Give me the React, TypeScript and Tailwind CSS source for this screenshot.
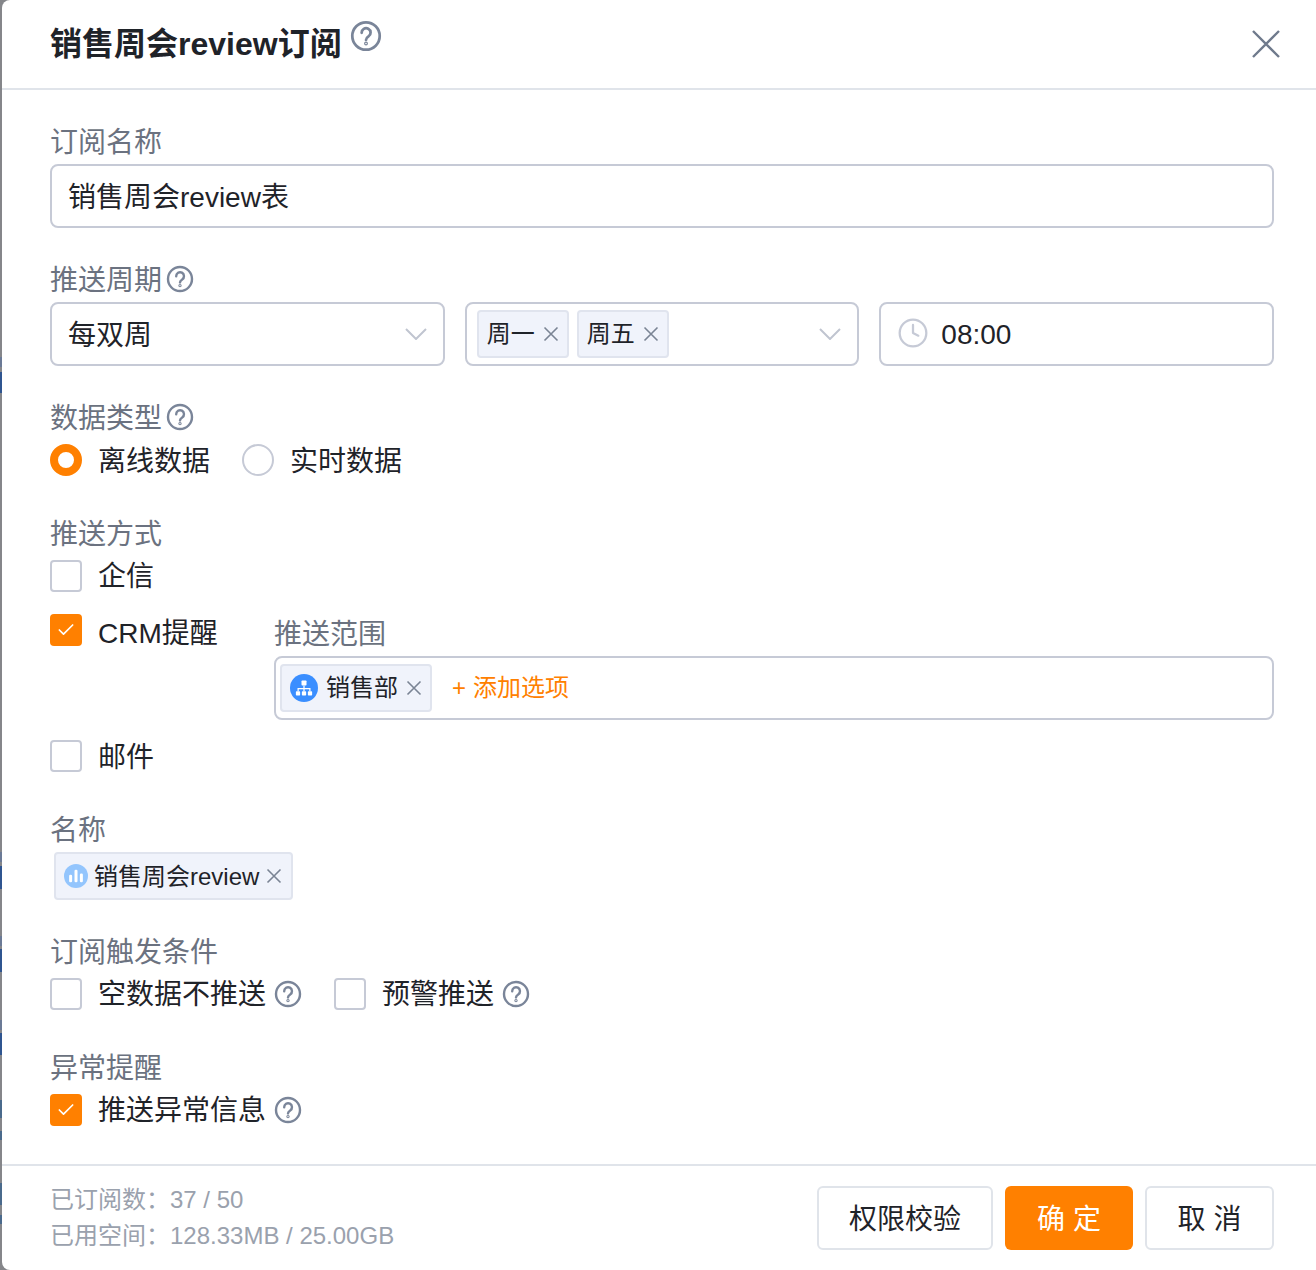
import React from "react";
import { Clock, Check } from "lucide-react";

const FONT = "font-['Liberation_Sans','Noto_Sans_CJK_SC',sans-serif]";

function Help({ className = "w-[28px] h-[28px]" }: { className?: string }) {
  return (
    <svg viewBox="0 0 28 28" className={`text-[#7a8599] shrink-0 ${className}`} fill="none" stroke="currentColor" strokeWidth="2.4" strokeLinecap="round">
      <circle cx="14" cy="14" r="12" />
      <path d="M10.2 11.2a3.9 3.9 0 1 1 6 3.2c-1.4.9-2.2 1.5-2.2 3" />
      <circle cx="14" cy="20.6" r="0.5" />
    </svg>
  );
}

function Chevron({ className = "" }: { className?: string }) {
  return (
    <svg viewBox="0 0 22 12" className={`w-[22px] h-[12px] text-[#c0c5d0] shrink-0 ${className}`} fill="none" stroke="currentColor" strokeWidth="2">
      <path d="M1 1l10 10L21 1" />
    </svg>
  );
}

function Label({ children }: { children: React.ReactNode }) {
  return <div className="h-[40px] mb-[2px] pt-[2px] flex items-center text-[28px] text-[#6b7280]">{children}</div>;
}

function CheckBox({ checked = false }: { checked?: boolean }) {
  if (checked) {
    return (
      <span className="w-[32px] h-[32px] rounded bg-[#ff8000] flex items-center justify-center shrink-0">
        <Check className="w-[20px] h-[20px] text-white" strokeWidth={2} />
      </span>
    );
  }
  return <span className="w-[32px] h-[32px] rounded border-2 border-[#c6cad6] bg-white shrink-0" />;
}

function Tag({ children, className = "" }: { children: React.ReactNode; className?: string }) {
  return (
    <span className={`h-[48px] flex items-center whitespace-nowrap rounded bg-[#f0f3fb] border-2 border-[#e0e4ee] text-[24px] text-[#1f2329] shrink-0 ${className}`}>
      {children}
    </span>
  );
}

function TagClose() {
  return (
    <svg viewBox="0 0 16 16" className="w-[16px] h-[16px] text-[#7a8494] shrink-0" fill="none" stroke="currentColor" strokeWidth="1.6">
      <path d="M1.5 1.5l13 13M14.5 1.5l-13 13" />
    </svg>
  );
}

// what shows of the page behind the dialog, down the left edge
function BackStrip() {
  return (
    <div className="w-[2px] h-[1270px] shrink-0 flex flex-col bg-[#85868a]">
      <div className="h-[357px]" />
      <div className="h-[10px] bg-[#6b7a96]" />
      <div className="h-[5px]" />
      <div className="h-[21px] bg-[#2f5590]" />
      <div className="h-[459px]" />
      <div className="h-[10px] bg-[#6b7a96]" />
      <div className="h-[4px]" />
      <div className="h-[23px] bg-[#2f5590]" />
      <div className="h-[47px]" />
      <div className="h-[10px] bg-[#6b7a96]" />
      <div className="h-[3px]" />
      <div className="h-[23px] bg-[#2f5590]" />
      <div className="h-[48px]" />
      <div className="h-[10px] bg-[#6b7a96]" />
      <div className="h-[3px]" />
      <div className="h-[22px] bg-[#2f5590]" />
      <div className="h-[45px]" />
      <div className="h-[18px] bg-[#4a6a8c]" />
      <div className="h-[13px]" />
      <div className="h-[9px] bg-[#4a6a8c]" />
      <div className="h-[43px]" />
      <div className="h-[22px] bg-[#4a6a8c]" />
      <div className="h-[10px]" />
      <div className="h-[9px] bg-[#4a6a8c]" />
    </div>
  );
}

export default function App() {
  return (
    <div className={`w-[1316px] h-[1270px] overflow-hidden flex bg-[#85868a] ${FONT}`}>
      <BackStrip />
      <div className="w-[1314px] h-[1270px] flex flex-col bg-white rounded-l-[8px] text-[#1f2329]">
        {/* header */}
        <div className="h-[90px] shrink-0 border-b-2 border-[#e0e4ea] pl-[48px] pr-[36px] flex items-center justify-between">
          <div className="flex items-start">
            <h1 className="text-[32px] font-semibold leading-[44px]">销售周会review订阅</h1>
            <Help className="w-[32px] h-[32px] ml-[8px] mt-[-2px]" />
          </div>
          <svg viewBox="0 0 28 28" className="w-[28px] h-[28px] text-[#6f7a8c]" fill="none" stroke="currentColor" strokeWidth="2.4">
            <path d="M1 1l26 26M27 1L1 27" />
          </svg>
        </div>

        {/* body */}
        <div className="flex-1 pl-[48px] pr-[42px] pt-[32px]">
          <Label>订阅名称</Label>
          <div className="h-[64px] border-2 border-[#c6cad6] rounded-[8px] px-[16px] pt-[4px] flex items-center text-[28px]">销售周会review表</div>

          <div className="mt-[32px]">
            <Label>
              推送周期
              <Help className="w-[28px] h-[28px] ml-[4px] mt-[-4px]" />
            </Label>
            <div className="grid grid-cols-3 gap-[20px]">
              <div className="h-[64px] border-2 border-[#c6cad6] rounded-[8px] pl-[16px] pr-[16px] flex items-center justify-between text-[28px]">
                <span className="pt-[4px]">每双周</span>
                <Chevron />
              </div>
              <div className="h-[64px] border-2 border-[#c6cad6] rounded-[8px] pl-[10px] pr-[16px] flex items-center gap-[8px]">
                <Tag className="w-[92px] pl-[8px] gap-[8px]">
                  周一
                  <TagClose />
                </Tag>
                <Tag className="w-[92px] pl-[8px] gap-[8px]">
                  周五
                  <TagClose />
                </Tag>
                <Chevron className="ml-auto" />
              </div>
              <div className="h-[64px] border-2 border-[#c6cad6] rounded-[8px] pl-[16px] flex items-center text-[28px]">
                <Clock className="w-[32px] h-[32px] text-[#c6cad6] mr-[12px] mt-[-2px]" strokeWidth={1.7} />
                <span className="pt-[2px]">08:00</span>
              </div>
            </div>
          </div>

          <div className="mt-[32px]">
            <Label>
              数据类型
              <Help className="w-[28px] h-[28px] ml-[4px] mt-[-4px]" />
            </Label>
            <div className="mt-[6px] flex items-center text-[28px] h-[32px]">
              <span className="w-[32px] h-[32px] rounded-full border-[8px] border-[#ff8000] bg-white shrink-0" />
              <span className="ml-[16px] pt-[3px]">离线数据</span>
              <span className="w-[32px] h-[32px] rounded-full border-2 border-[#c6cad6] ml-[32px] shrink-0" />
              <span className="ml-[16px] pt-[3px]">实时数据</span>
            </div>
          </div>

          <div className="mt-[38px]">
            <Label>推送方式</Label>
            <div className="mt-[6px] flex items-center gap-[16px] text-[28px] h-[32px]">
              <CheckBox />
              <span className="pt-[2px]">企信</span>
            </div>
            <div className="mt-[22px] flex items-start">
              <div className="w-[224px] flex items-center gap-[16px] text-[28px] h-[32px] shrink-0">
                <CheckBox checked />
                <span className="pt-[8px]">CRM提醒</span>
              </div>
              <div className="flex-1 mt-[-1px]">
                <div className="h-[40px] mb-[3px] pt-[4px] flex items-center text-[28px] text-[#6b7280]">推送范围</div>
                <div className="h-[64px] border-2 border-[#c6cad6] rounded-[8px] pl-[4px] flex items-center">
                  <Tag className="w-[152px] pl-[8px]">
                    <span className="w-[28px] h-[28px] rounded-full bg-[#3a8eff] flex items-center justify-center shrink-0 mr-[8px]">
                      <svg viewBox="0 0 16 16" className="w-[20px] h-[20px]" fill="white">
                        <rect x="6" y="2" width="4" height="4" rx="0.6" />
                        <rect x="1.5" y="10.5" width="3.4" height="3.4" rx="0.6" />
                        <rect x="6.3" y="10.5" width="3.4" height="3.4" rx="0.6" />
                        <rect x="11.1" y="10.5" width="3.4" height="3.4" rx="0.6" />
                        <path d="M7.5 6h1v2h4.7v2.5h-1V9H8.5v1.5h-1V9H3.8v1.5h-1V8h4.7z" />
                      </svg>
                    </span>
                    销售部
                    <span className="ml-[8px]">
                      <TagClose />
                    </span>
                  </Tag>
                  <span className="ml-[20px] text-[24px] text-[#ff8000] flex items-center">
                    <span className="mr-[7px]">+</span>
                    添加选项
                  </span>
                </div>
              </div>
            </div>
            <div className="mt-[20px] flex items-center gap-[16px] text-[28px] h-[32px]">
              <CheckBox />
              <span className="pt-[4px]">邮件</span>
            </div>
          </div>

          <div className="mt-[38px]">
            <Label>名称</Label>
            <Tag className="w-[239px] ml-[4px] pl-[8px]">
              <span className="w-[24px] h-[24px] rounded-full bg-[#93c5fd] flex items-center justify-center shrink-0 mr-[6px]">
                <svg viewBox="0 0 16 16" className="w-[20px] h-[20px]" fill="white">
                  <rect x="2.5" y="7" width="2.4" height="6" rx="1" />
                  <rect x="6.8" y="3" width="2.4" height="10" rx="1" />
                  <rect x="11.1" y="6" width="2.4" height="7" rx="1" />
                </svg>
              </span>
              <span className="pt-[2px]">销售周会review</span>
              <span className="ml-[7px]">
                <TagClose />
              </span>
            </Tag>
          </div>

          <div className="mt-[32px]">
            <Label>订阅触发条件</Label>
            <div className="mt-[6px] flex items-center text-[28px] h-[32px]">
              <CheckBox />
              <span className="ml-[16px] pt-[2px]">空数据不推送</span>
              <Help className="w-[28px] h-[28px] ml-[8px]" />
              <span className="ml-[32px] flex shrink-0">
                <CheckBox />
              </span>
              <span className="ml-[16px] pt-[2px]">预警推送</span>
              <Help className="w-[28px] h-[28px] ml-[8px]" />
            </div>
          </div>

          <div className="mt-[38px]">
            <Label>异常提醒</Label>
            <div className="mt-[6px] flex items-center text-[28px] h-[32px]">
              <CheckBox checked />
              <span className="ml-[16px] pt-[2px]">推送异常信息</span>
              <Help className="w-[28px] h-[28px] ml-[8px]" />
            </div>
          </div>
        </div>

        {/* footer */}
        <div className="h-[106px] shrink-0 border-t-2 border-[#e0e4ea] pl-[48px] pr-[42px] flex items-center justify-between">
          <div className="text-[24px] leading-[36px] text-[#9aa1ad]">
            <div>已订阅数：37 / 50</div>
            <div>已用空间：128.33MB / 25.00GB</div>
          </div>
          <div className="flex items-center gap-[12px] text-[28px]">
            <button className="w-[176px] h-[64px] pt-[4px] rounded-[6px] border-2 border-[#e0e4ea] bg-white">权限校验</button>
            <button className="w-[128px] h-[64px] pt-[4px] rounded-[6px] bg-[#ff8000] text-white">确 定</button>
            <button className="w-[129px] h-[64px] pt-[4px] rounded-[6px] border-2 border-[#e0e4ea] bg-white">取 消</button>
          </div>
        </div>
      </div>
    </div>
  );
}
